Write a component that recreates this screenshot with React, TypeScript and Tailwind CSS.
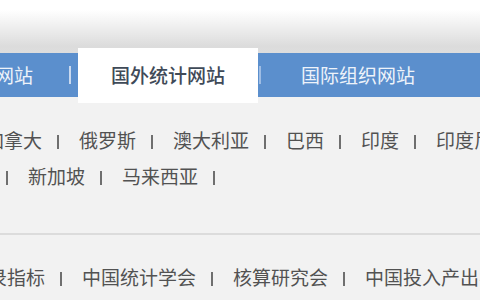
import React from "react";

const font = { fontFamily: '"Noto Sans CJK SC", "Noto Sans", sans-serif' };

function Sep() {
  return <div className="ml-[15px] mr-[20px] mt-[3px] h-[14px] w-[2px] shrink-0 bg-[#6f6f6f]" />;
}

function Row({ items, lead, className }: { items: string[]; lead?: boolean; className?: string }) {
  return (
    <div className={`flex h-[36px] items-center whitespace-nowrap ${className ?? ""}`}>
      {lead && <div className="ml-[6px] mr-[20px] mt-[3px] h-[14px] w-[2px] shrink-0 bg-[#6f6f6f]" />}
      {items.map((t, i) => (
        <React.Fragment key={i}>
          <span className="shrink-0">{t}</span>
          <Sep />
        </React.Fragment>
      ))}
    </div>
  );
}

export default function App() {
  return (
    <div
      className="h-[300px] w-[480px] overflow-hidden bg-[#f2f2f2] text-[19px] leading-[36px] text-[#525252]"
      style={font}
    >
      <div className="h-[53px] bg-[linear-gradient(to_bottom,#ffffff_0px,#ffffff_10px,#dcdcdc_46px,#dddddd_53px)]" />
      <div className="flex h-[44px] items-center whitespace-nowrap bg-[#5b8fcd] text-[#eef3fa]">
        <span className="ml-[-81px] shrink-0">国内统计网站</span>
        <div className="ml-[36px] h-[18px] w-[2px] shrink-0 bg-[#c9d9ef]" />
        <div className="ml-[7px] flex h-[55px] w-[180px] shrink-0 items-center justify-center bg-white font-medium text-[#3f4a58]">
          国外统计网站
        </div>
        <div className="ml-[1px] h-[18px] w-[2px] shrink-0 bg-[#9fbde4]" />
        <span className="ml-[40px] shrink-0">国际组织网站</span>
      </div>
      <div className="pt-[25px]">
        <Row className="ml-[-15px]" items={["加拿大", "俄罗斯", "澳大利亚", "巴西", "印度", "印度尼西亚"]} />
        <Row lead items={["新加坡", "马来西亚"]} />
      </div>
      <div className="mt-[39px] h-[2px] bg-[#dcdcdc]" />
      <div className="pt-[24px]">
        <Row className="ml-[-12px]" items={["录指标", "中国统计学会", "核算研究会", "中国投入产出学会"]} />
      </div>
    </div>
  );
}
